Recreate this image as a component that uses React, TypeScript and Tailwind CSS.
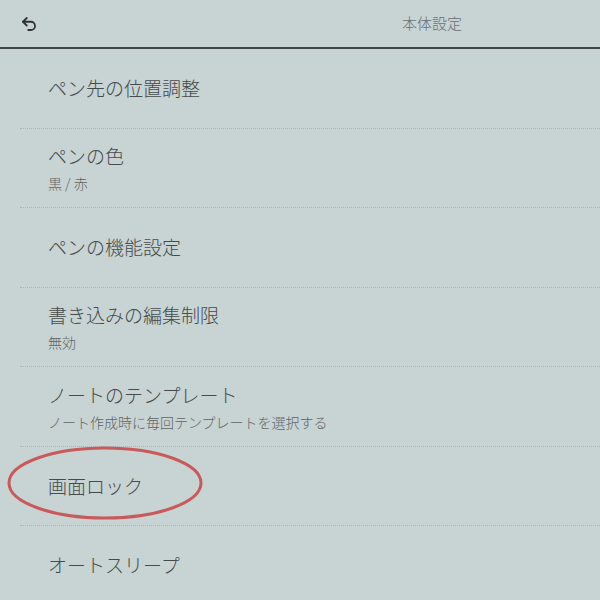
import { Undo2 } from "lucide-react";

interface Item {
  title: string;
  sub?: string;
  circled?: boolean;
}

const items: Item[] = [
  { title: "ペン先の位置調整" },
  { title: "ペンの色", sub: "黒 / 赤" },
  { title: "ペンの機能設定" },
  { title: "書き込みの編集制限", sub: "無効" },
  { title: "ノートのテンプレート", sub: "ノート作成時に毎回テンプレートを選択する" },
  { title: "画面ロック", circled: true },
  { title: "オートスリープ" },
];

function Row({ item }: { item: Item }) {
  return (
    <li className="relative h-[79.5px] border-b border-dotted border-[#aab5b6] flex flex-col justify-center gap-[5px] pl-[28px]">
      <span className="text-[19px] leading-[26px] font-light text-[#464a4b]">{item.title}</span>
      {item.sub && (
        <span className="text-[14px] leading-[18px] font-light text-[#5f6465]">{item.sub}</span>
      )}
      {item.circled && (
        // hand-drawn annotation over the row
        <svg
          className="absolute left-[-14px] top-[-2px]"
          width="200"
          height="78"
          viewBox="0 0 200 78"
        >
          <ellipse
            cx="99"
            cy="38"
            rx="96"
            ry="35"
            fill="none"
            stroke="#c95a5c"
            strokeWidth="3"
          />
        </svg>
      )}
    </li>
  );
}

export default function App() {
  return (
    <div
      className="w-[600px] h-[600px] overflow-hidden bg-[#c8d3d4]"
      style={{ fontFamily: '"Noto Sans CJK JP", "Noto Sans", sans-serif' }}
    >
      <header className="h-[49px] flex items-center border-b-2 border-[#3f4444] pl-[20px]">
        <Undo2 size={18} strokeWidth={2.4} className="text-[#2f3333]" />
        <span className="ml-[364px] text-[15px] font-light text-[#6a6f70]">本体設定</span>
      </header>
      <ul className="pl-5">
        {items.map((it) => (
          <Row key={it.title} item={it} />
        ))}
      </ul>
    </div>
  );
}
